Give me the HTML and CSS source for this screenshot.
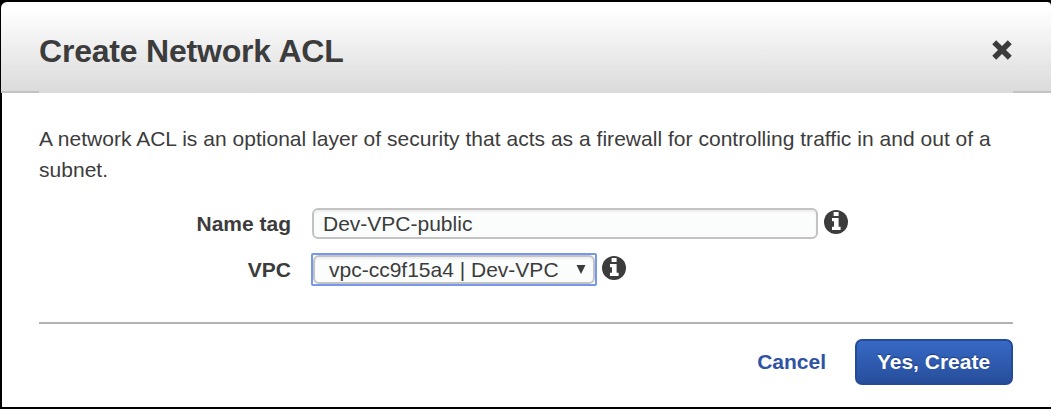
FILE: index.html
```html
<!DOCTYPE html>
<html lang="en">
<head>
<meta charset="utf-8">
<title>Create Network ACL</title>
<link rel="stylesheet" href="styles.css">
</head>
<body>
<div class="dialog">
  <header class="header">
    <h1 class="title">Create Network ACL</h1>
    <button class="close" aria-label="Close"><svg width="20" height="20" viewBox="0 0 20 20"><path d="M4.2 4.2 15.8 15.8M15.8 4.2 4.2 15.8" stroke="#3c3c3c" stroke-width="5.6" stroke-linecap="square" stroke-linejoin="round"/></svg></button>
  </header>
  <main class="content">
    <p class="intro">A network ACL is an optional layer of security that acts as a firewall for controlling traffic in and out of a subnet.</p>
    <div class="row">
      <label class="label">Name tag</label>
      <div class="field name-field"><span>Dev-VPC-public</span></div>
      <svg class="info" viewBox="0 0 24 24"><circle cx="12" cy="12" r="12"/><path d="M9.6 2h5v4h-5zM8 8h6.6v8.7h2V20H8v-3.3h2v-5.4H8z"/></svg>
    </div>
    <div class="row vpc-row">
      <label class="label">VPC</label>
      <div class="focus"><div class="field vpc-field"><span>vpc-cc9f15a4 | Dev-VPC</span><svg class="arrow" viewBox="0 0 10 9"><path d="M.5 0h9L5 9z"/></svg></div></div>
      <svg class="info" viewBox="0 0 24 24"><circle cx="12" cy="12" r="12"/><path d="M9.6 2h5v4h-5zM8 8h6.6v8.7h2V20H8v-3.3h2v-5.4H8z"/></svg>
    </div>
    <footer class="footer">
      <a class="cancel">Cancel</a>
      <button class="create">Yes, Create</button>
    </footer>
  </main>
</div>
</body>
</html>
```
FILE: styles.css
```css
* { box-sizing: border-box; }
body { margin: 0; background: #000; font-family: "Liberation Sans", Arial, sans-serif; font-size: 21px; color: #3c3c3c; }
.dialog { height: 409px; padding-top: 2px; display: flex; flex-direction: column; overflow: hidden; }
.header { height: 91px; flex: none; margin-left: 1px; padding: 0 38px; display: flex; align-items: center; justify-content: space-between; border-radius: 6px 4px 0 0;
  background: linear-gradient(#c3c3c3, #c3c3c3) left bottom / 38px 2px no-repeat, linear-gradient(#c3c3c3, #c3c3c3) right bottom / 38px 2px no-repeat, linear-gradient(#fff 8%, #dadada); }
.title { margin: 7px 0 0; font-size: 32px; line-height: 40px; letter-spacing: -0.2px; white-space: nowrap; }
.close { border: 0; padding: 0; margin: 5px 1px 0 0; background: none; width: 20px; height: 20px; }
.close svg { display: block; border-radius: 3px; }
.content { height: 314px; flex: none; margin-left: 2px; padding: 30px 38px 0 37px; background: #fff; }
.intro { margin: 0; line-height: 31px; height: 85px; letter-spacing: 0.025px; }
.row { display: flex; height: 31px; align-items: center; }
.label { width: 252px; margin-right: 21px; text-align: right; font-weight: bold; line-height: 31px; }
.field { height: 31px; display: flex; align-items: center; border: 2px solid #c3c3c3; border-radius: 6px; background: #fbfdfc; box-shadow: inset 0 2px 2px #eee; white-space: nowrap; }
.name-field { width: 506px; padding-left: 9px; }
.info { width: 24px; height: 24px; margin: -4px 0 0 6px; fill: #3c3c3c; }
.info path { fill: #fff; }
.vpc-row { height: 33px; margin-top: 14px; }
.focus { width: 286px; height: 33px; margin-left: -1px; border: 2px solid #7598ed; border-radius: 2px; background: #fff; }
.vpc-field { height: 29px; padding: 0 7px 0 14px; justify-content: space-between; }
.arrow { width: 10px; height: 9px; fill: #3c3c3c; }
.vpc-row .info { margin-left: 5px; }
.footer { margin-top: 36px; padding-top: 15px; border-top: 2px solid #b2b2b2; display: flex; justify-content: flex-end; align-items: center; font-weight: bold; }
.cancel { color: #3054a5; margin-right: 29px; }
.create { width: 158px; height: 46px; padding: 0 1px 0 0; color: #fff; font: inherit; border: 2px solid #254b98; border-radius: 7px; background: linear-gradient(#3769c5, #274e9b); text-shadow: 0 -1px 1px #1d3d7d; }
```
